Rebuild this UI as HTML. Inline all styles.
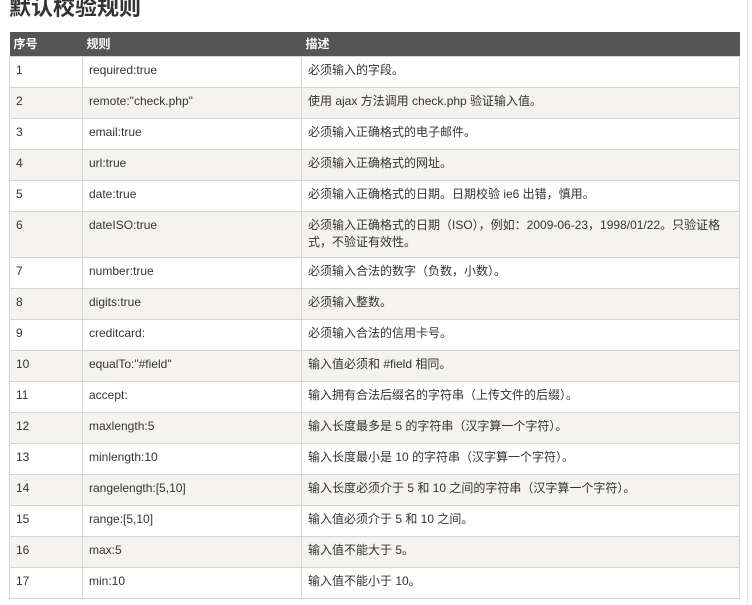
<!DOCTYPE html>
<html><head><meta charset="utf-8"><style>
body{margin:0;background:#fff;font-family:"Liberation Sans","Noto Sans CJK SC",sans-serif;color:#333;width:752px;height:605px;overflow:hidden;position:relative}
h1{position:absolute;left:9px;top:-7px;margin:0;font-size:22px;font-weight:bold;color:#333;line-height:30px}
table{position:absolute;left:9px;top:32px;width:731px;border-collapse:collapse;font-size:12px}
th{background:#555;color:#fff;text-align:left;font-weight:bold;height:24px;padding:0 4px;line-height:24px;font-size:12px}
td{border:1px solid #d4d4d4;padding:5px 6px 0 6px;height:25px;line-height:17px;vertical-align:top;box-sizing:content-box}
tr.t td{height:40px}
tr:nth-child(odd) td{background:#f4f3ef}
.sb{position:absolute;left:747px;top:0;width:1px;height:605px;background:#e6e6e6}
</style></head><body>
<h1>默认校验规则</h1>
<table>
<colgroup><col style="width:73px"><col style="width:219px"><col></colgroup>
<tr><th>序号</th><th>规则</th><th>描述</th></tr>
<tr><td>1</td><td>required:true</td><td>必须输入的字段。</td></tr>
<tr><td>2</td><td>remote:"check.php"</td><td>使用 ajax 方法调用 check.php 验证输入值。</td></tr>
<tr><td>3</td><td>email:true</td><td>必须输入正确格式的电子邮件。</td></tr>
<tr><td>4</td><td>url:true</td><td>必须输入正确格式的网址。</td></tr>
<tr><td>5</td><td>date:true</td><td>必须输入正确格式的日期。日期校验 ie6 出错，慎用。</td></tr>
<tr class="t"><td>6</td><td>dateISO:true</td><td>必须输入正确格式的日期（ISO），例如：2009-06-23，1998/01/22。只验证格式，不验证有效性。</td></tr>
<tr><td>7</td><td>number:true</td><td>必须输入合法的数字（负数，小数）。</td></tr>
<tr><td>8</td><td>digits:true</td><td>必须输入整数。</td></tr>
<tr><td>9</td><td>creditcard:</td><td>必须输入合法的信用卡号。</td></tr>
<tr><td>10</td><td>equalTo:"#field"</td><td>输入值必须和 #field 相同。</td></tr>
<tr><td>11</td><td>accept:</td><td>输入拥有合法后缀名的字符串（上传文件的后缀）。</td></tr>
<tr><td>12</td><td>maxlength:5</td><td>输入长度最多是 5 的字符串（汉字算一个字符）。</td></tr>
<tr><td>13</td><td>minlength:10</td><td>输入长度最小是 10 的字符串（汉字算一个字符）。</td></tr>
<tr><td>14</td><td>rangelength:[5,10]</td><td>输入长度必须介于 5 和 10 之间的字符串（汉字算一个字符）。</td></tr>
<tr><td>15</td><td>range:[5,10]</td><td>输入值必须介于 5 和 10 之间。</td></tr>
<tr><td>16</td><td>max:5</td><td>输入值不能大于 5。</td></tr>
<tr><td>17</td><td>min:10</td><td>输入值不能小于 10。</td></tr>
</table>
<div class="sb"></div>
</body></html>
